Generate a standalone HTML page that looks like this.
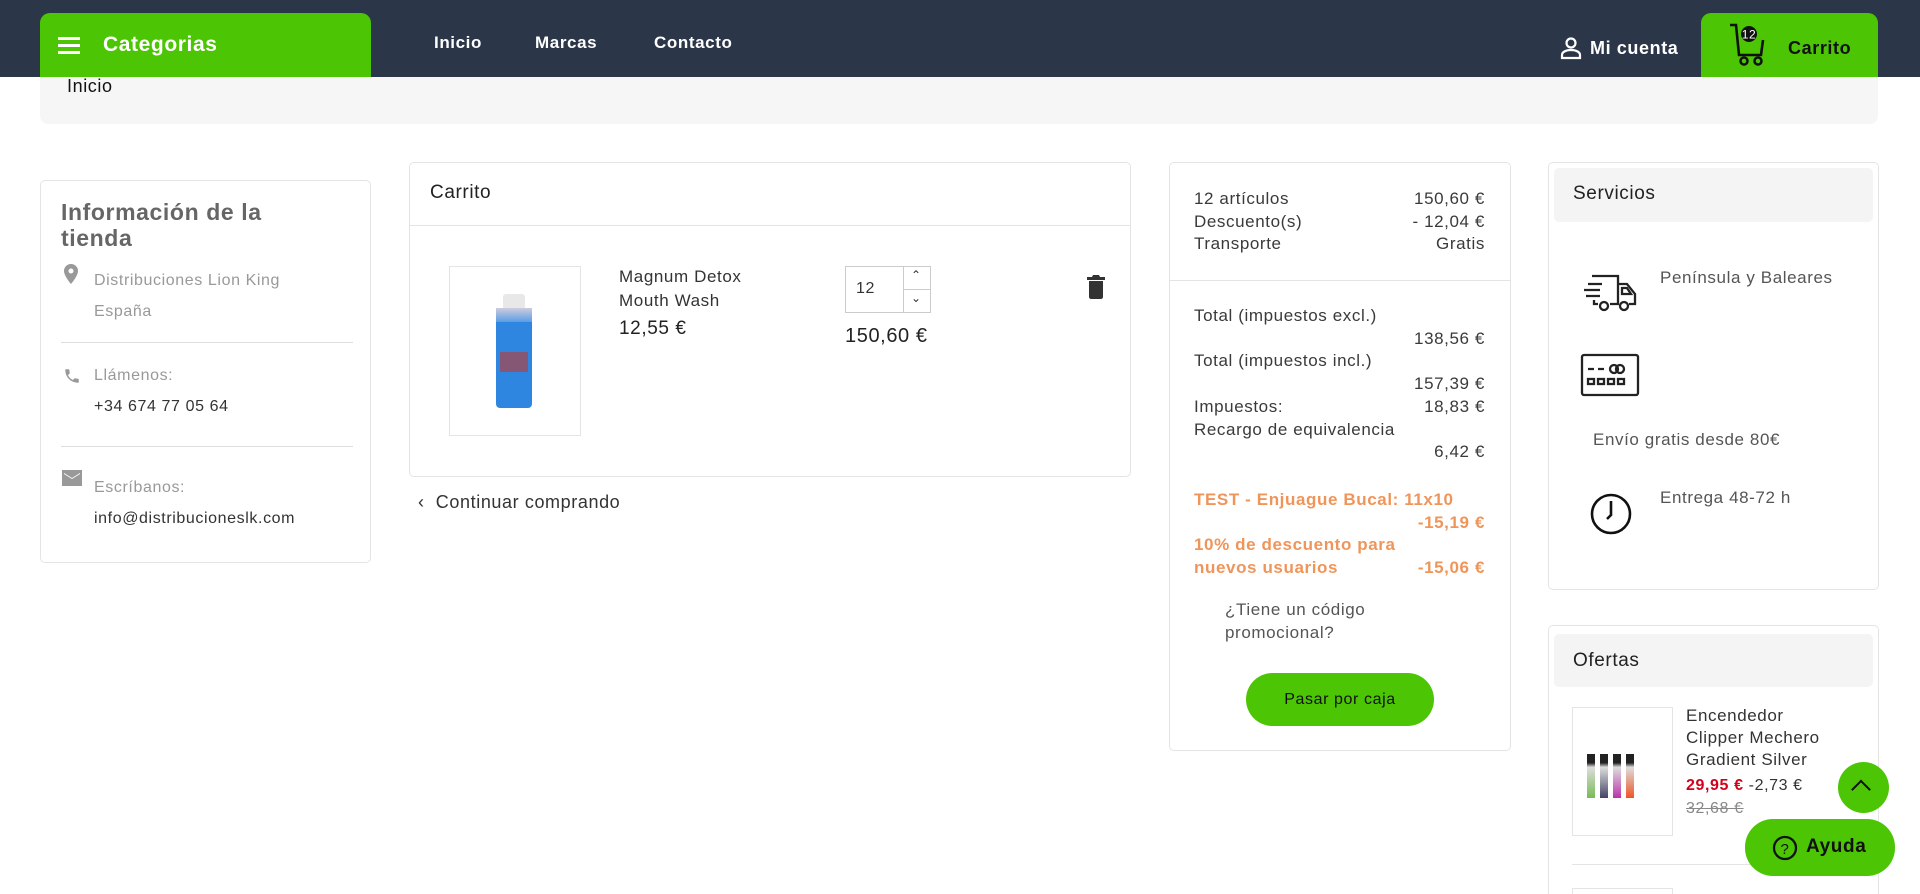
<!DOCTYPE html>
<html style="height:894px;overflow:hidden"><head><meta charset="utf-8"><style>
*{margin:0;padding:0;box-sizing:border-box}
body{width:1920px;height:894px;overflow:hidden;background:#fff;font-family:"Liberation Sans",sans-serif;color:#333;position:relative;letter-spacing:.6px}
.a{position:absolute;white-space:nowrap}
.card{position:absolute;border:1px solid #e4e4e4;border-radius:5px;background:#fff}
.g{background:#4cc505}
.r{text-align:right}
.t{font-size:17px;color:#3a3a3a}
</style></head><body>
<div class="a" style="left:0;top:0;width:1920px;height:77px;background:#2b3648"></div>
<div class="a g" style="left:40px;top:13px;width:331px;height:64px;border-radius:10px 10px 0 0"></div>
<div class="a" style="left:58px;top:37px;width:22px;height:3px;background:#fff;box-shadow:0 7px #fff,0 14px #fff"></div>
<div class="a" style="left:103px;top:33px;color:#fff;font-weight:bold;font-size:21px">Categorias</div>
<div class="a" style="left:434px;top:33px;color:#fff;font-weight:bold;font-size:17px">Inicio</div>
<div class="a" style="left:535px;top:33px;color:#fff;font-weight:bold;font-size:17px">Marcas</div>
<div class="a" style="left:654px;top:33px;color:#fff;font-weight:bold;font-size:17px">Contacto</div>
<svg class="a" style="left:1560px;top:36px" width="22" height="24" viewBox="0 0 22 24"><circle cx="11" cy="7" r="4.5" fill="none" stroke="#fff" stroke-width="2.2"/><path d="M2 22v-3c0-3 4-5 9-5s9 2 9 5v3z" fill="none" stroke="#fff" stroke-width="2.2"/></svg>
<div class="a" style="left:1590px;top:38px;color:#fff;font-weight:bold;font-size:18px">Mi cuenta</div>
<div class="a g" style="left:1701px;top:13px;width:177px;height:64px;border-radius:10px 10px 0 0"></div>
<svg class="a" style="left:1727px;top:22px" width="46" height="46" viewBox="0 0 46 46"><path d="M3 3h6l3 30h22l2-15" fill="none" stroke="#111" stroke-width="2.6"/><circle cx="17" cy="39" r="3.5" fill="none" stroke="#111" stroke-width="2.5"/><circle cx="31" cy="39" r="3.5" fill="none" stroke="#111" stroke-width="2.5"/><circle cx="22" cy="12" r="8" fill="#111"/><text x="22" y="16.5" font-size="12" fill="#fff" text-anchor="middle" font-family="Liberation Sans">12</text></svg>
<div class="a" style="left:1788px;top:38px;color:#111;font-weight:bold;font-size:18px">Carrito</div>
<div class="a" style="left:40px;top:77px;width:1838px;height:47px;background:#f6f6f6;border-radius:0 0 8px 8px"></div>
<div class="a" style="left:67px;top:76px;font-size:18px;color:#111">Inicio</div>

<div class="card" style="left:40px;top:180px;width:331px;height:383px"></div>
<div class="a" style="left:61px;top:199px;font-size:23px;font-weight:bold;color:#666;line-height:26px;white-space:normal;width:240px">Información de la tienda</div>
<svg class="a" style="left:63px;top:264px" width="16" height="22" viewBox="0 0 16 22"><path d="M8 0a7 7 0 0 0-7 7c0 5 7 13 7 13s7-8 7-13a7 7 0 0 0-7-7zm0 9.5a2.5 2.5 0 1 1 0-5 2.5 2.5 0 0 1 0 5z" fill="#999"/></svg>
<div class="a" style="left:94px;top:265px;font-size:16px;color:#999;line-height:31px">Distribuciones Lion King<br>España</div>
<div class="a" style="left:61px;top:342px;width:292px;height:1px;background:#ddd"></div>
<svg class="a" style="left:63px;top:367px" width="18" height="18" viewBox="0 0 24 24"><path d="M6.6 10.8c1.4 2.8 3.8 5.1 6.6 6.6l2.2-2.2c.3-.3.7-.4 1-.2 1.1.4 2.3.6 3.6.6.6 0 1 .4 1 1V20c0 .6-.4 1-1 1C10.6 21 3 13.4 3 4c0-.6.4-1 1-1h3.5c.6 0 1 .4 1 1 0 1.3.2 2.5.6 3.6.1.3 0 .7-.2 1z" fill="#999"/></svg>
<div class="a" style="left:94px;top:367px;font-size:16px;color:#999">Llámenos:</div>
<div class="a" style="left:94px;top:398px;font-size:16px;color:#333">+34 674 77 05 64</div>
<div class="a" style="left:61px;top:446px;width:292px;height:1px;background:#ddd"></div>
<svg class="a" style="left:62px;top:470px" width="20" height="16" viewBox="0 0 20 16"><path d="M0 0h20v16H0zM2 3v1l8 5 8-5V3l-8 5z" fill="#999" fill-rule="evenodd"/></svg>
<div class="a" style="left:94px;top:479px;font-size:16px;color:#999">Escríbanos:</div>
<div class="a" style="left:94px;top:510px;font-size:16px;color:#333">info@distribucioneslk.com</div>

<div class="card" style="left:409px;top:162px;width:722px;height:315px"></div>
<div class="a" style="left:430px;top:182px;font-size:19px;color:#222">Carrito</div>
<div class="a" style="left:410px;top:225px;width:720px;height:1px;background:#e4e4e4"></div>
<div class="a" style="left:449px;top:266px;width:132px;height:170px;border:1px solid #e4e4e4"></div>
<div class="a" style="left:503px;top:294px;width:22px;height:14px;background:#e8e8e8;border-radius:3px 3px 0 0"></div>
<div class="a" style="left:496px;top:308px;width:36px;height:18px;background:linear-gradient(#ccd,#3a8fe8)"></div>
<div class="a" style="left:496px;top:322px;width:36px;height:86px;background:#2f86e0;border-radius:0 0 4px 4px"></div>
<div class="a" style="left:500px;top:352px;width:28px;height:20px;background:#c0392b;opacity:.6"></div>
<div class="a" style="left:619px;top:265px;font-size:17px;color:#333;line-height:24px">Magnum Detox<br>Mouth Wash</div>
<div class="a" style="left:619px;top:318px;font-size:19px;color:#222">12,55 €</div>
<div class="a" style="left:845px;top:266px;width:86px;height:47px;border:1px solid #ccc"></div>
<div class="a" style="left:903px;top:266px;width:1px;height:47px;background:#ccc"></div>
<div class="a" style="left:903px;top:289px;width:28px;height:1px;background:#ccc"></div>
<div class="a" style="left:856px;top:280px;font-size:16px">12</div>
<div class="a" style="left:911px;top:268px;font-size:12px">&#8963;</div>
<div class="a" style="left:911px;top:291px;font-size:12px">&#8964;</div>
<div class="a" style="left:845px;top:325px;font-size:20px;color:#222">150,60 €</div>
<svg class="a" style="left:1087px;top:275px" width="18" height="24" viewBox="0 0 18 24"><path d="M2 6h14v16c0 1-1 2-2 2H4c-1 0-2-1-2-2zM0 2h5l1-2h6l1 2h5v3H0z" fill="#333"/></svg>
<div class="a" style="left:418px;top:492px;font-size:18px;color:#333">‹&nbsp;&nbsp;Continuar comprando</div>

<div class="card" style="left:1169px;top:162px;width:342px;height:589px"></div>
<div class="a t" style="left:1194px;top:188px;line-height:22.5px">12 artículos<br>Descuento(s)<br>Transporte</div>
<div class="a t r" style="left:1360px;width:125px;top:188px;line-height:22.5px">150,60 €<br>- 12,04 €<br>Gratis</div>
<div class="a" style="left:1170px;top:280px;width:340px;height:1px;background:#e4e4e4"></div>
<div class="a t" style="left:1194px;top:305px;line-height:22.7px">Total (impuestos excl.)<br><br>Total (impuestos incl.)<br><br>Impuestos:<br>Recargo de equivalencia</div>
<div class="a t r" style="left:1360px;width:125px;top:305px;line-height:22.7px"><br>138,56 €<br><br>157,39 €<br>18,83 €<br><br>6,42 €</div>
<div class="a" style="left:1194px;top:489px;font-size:17px;font-weight:bold;color:#f0955a;line-height:22.5px">TEST - Enjuague Bucal: 11x10<br><br>10% de descuento para<br>nuevos usuarios</div>
<div class="a r" style="left:1360px;width:125px;top:489px;font-size:17px;font-weight:bold;color:#f0955a;line-height:22.5px"><br>-15,19 €<br><br>-15,06 €</div>
<div class="a t" style="left:1225px;top:598px;line-height:23px;color:#555">¿Tiene un código<br>promocional?</div>
<div class="a g" style="left:1246px;top:673px;width:188px;height:53px;border-radius:27px"></div>
<div class="a" style="left:1246px;top:690px;width:188px;text-align:center;font-size:16px;line-height:20px;color:#111">Pasar por caja</div>

<div class="card" style="left:1548px;top:162px;width:331px;height:428px"></div>
<div class="a" style="left:1554px;top:168px;width:319px;height:54px;background:#f4f4f4;border-radius:5px"></div>
<div class="a" style="left:1573px;top:183px;font-size:19px;color:#222">Servicios</div>
<svg class="a" style="left:1580px;top:272px" width="62" height="42" viewBox="0 0 62 42"><g fill="none" stroke="#222" stroke-width="2.3"><path d="M12 4h26v28H30M38 12h9l8 10v10h-6M8 12h14M4 18h16M6 24h14M14 28v4h4"/><circle cx="24" cy="34" r="4"/><circle cx="44" cy="34" r="4"/><path d="M42 16h5l4 6h-9z"/></g></svg>
<div class="a" style="left:1660px;top:268px;font-size:17px;color:#555">Península y Baleares</div>
<svg class="a" style="left:1580px;top:353px" width="60" height="44" viewBox="0 0 60 44"><g fill="none" stroke="#222" stroke-width="2.3"><rect x="2" y="2" width="56" height="40" rx="2"/><path d="M8 16h6M18 16h6"/><circle cx="34" cy="16" r="4"/><circle cx="40" cy="16" r="4"/><rect x="8" y="26" width="6" height="5"/><rect x="18" y="26" width="6" height="5"/><rect x="28" y="26" width="6" height="5"/><rect x="38" y="26" width="6" height="5"/></g></svg>
<div class="a" style="left:1593px;top:430px;font-size:17px;color:#555">Envío gratis desde 80€</div>
<svg class="a" style="left:1589px;top:492px" width="44" height="44" viewBox="0 0 44 44"><circle cx="22" cy="22" r="19" fill="none" stroke="#111" stroke-width="2.6"/><path d="M22 9v14l-4 4" fill="none" stroke="#111" stroke-width="2.6"/></svg>
<div class="a" style="left:1660px;top:488px;font-size:17px;color:#555">Entrega 48-72 h</div>

<div class="card" style="left:1548px;top:625px;width:331px;height:280px;border-bottom:none;border-radius:5px 5px 0 0"></div>
<div class="a" style="left:1554px;top:634px;width:319px;height:53px;background:#f4f4f4;border-radius:5px"></div>
<div class="a" style="left:1573px;top:650px;font-size:19px;color:#222">Ofertas</div>
<div class="a" style="left:1572px;top:707px;width:101px;height:129px;border:1px solid #e4e4e4"></div>
<div class="a" style="left:1587px;top:754px;width:8px;height:44px;background:linear-gradient(#222 20%,#ddd 30%,#7b5)"></div>
<div class="a" style="left:1600px;top:754px;width:8px;height:44px;background:linear-gradient(#222 20%,#ddd 30%,#446)"></div>
<div class="a" style="left:1613px;top:754px;width:8px;height:44px;background:linear-gradient(#222 20%,#ddd 30%,#b3a)"></div>
<div class="a" style="left:1626px;top:754px;width:8px;height:44px;background:linear-gradient(#222 20%,#ddd 30%,#e52)"></div>
<div class="a" style="left:1686px;top:705px;font-size:17px;color:#333;line-height:22px">Encendedor<br>Clipper Mechero<br>Gradient Silver</div>
<div class="a" style="left:1686px;top:777px;font-size:16px"><b style="color:#d0021b">29,95 €</b> -2,73 €</div>
<div class="a" style="left:1686px;top:800px;font-size:16px;color:#888;text-decoration:line-through">32,68 €</div>
<div class="a" style="left:1572px;top:864px;width:290px;height:1px;background:#e4e4e4"></div>
<div class="a" style="left:1572px;top:888px;width:101px;height:6px;border:1px solid #e4e4e4;border-bottom:none"></div>
<div class="a g" style="left:1838px;top:762px;width:51px;height:51px;border-radius:50%"></div>
<div class="a" style="left:1854px;top:774px;width:14px;height:14px;border-left:2.5px solid #111;border-top:2.5px solid #111;transform:rotate(45deg) translate(6px,6px)"></div>
<div class="a g" style="left:1745px;top:819px;width:150px;height:57px;border-radius:28px"></div>
<svg class="a" style="left:1772px;top:835px" width="26" height="26" viewBox="0 0 26 26"><circle cx="13" cy="13" r="11" fill="none" stroke="#111" stroke-width="2.3"/><text x="13" y="19" font-size="15" text-anchor="middle" fill="#111" font-family="Liberation Sans">?</text></svg>
<div class="a" style="left:1806px;top:836px;font-size:19px;font-weight:bold;color:#111">Ayuda</div>
</body></html>
